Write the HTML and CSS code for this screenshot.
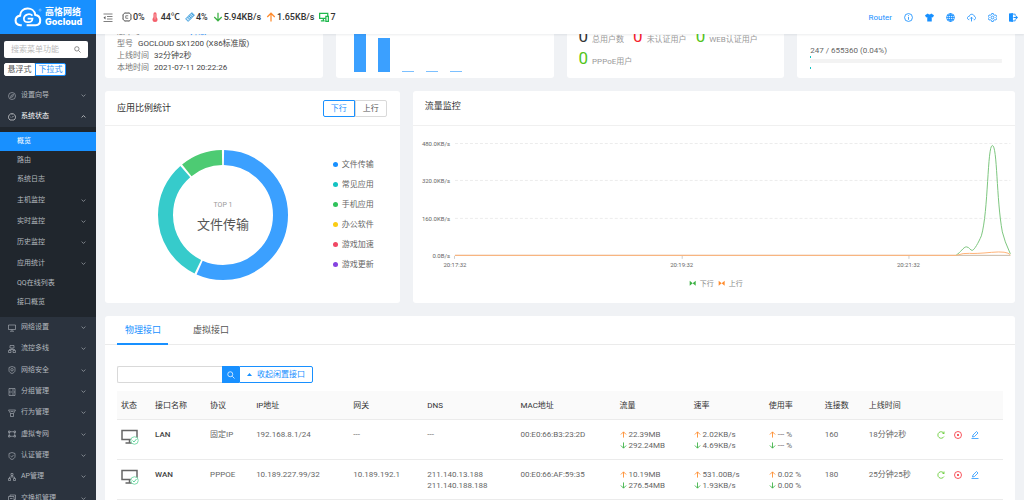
FILE: index.html
```html
<!DOCTYPE html>
<html lang="zh-CN">
<head>
  <meta charset="UTF-8" />
  <meta name="viewport" content="width=device-width, initial-scale=1.0" />
  <title>高恪网络 - 概览</title>
  <link rel="stylesheet" href="styles.css">
</head>
<body>
  <!-- shared icons -->
  <svg class="sprite" aria-hidden="true">
    <symbol id="i-up" viewBox="0 0 16 16"><path d="M8 15V2M2 8l6-6 6 6" /></symbol>
    <symbol id="i-down" viewBox="0 0 16 16"><path d="M8 1v13M2 8l6 6 6-6" /></symbol>
    <symbol id="i-chev" viewBox="0 0 16 16"><path d="M2 5l6 6 6-6" /></symbol>
    <symbol id="i-search" viewBox="0 0 16 16"><circle cx="6.5" cy="6.5" r="5" /><path d="M10.5 10.5L15 15" /></symbol>
    <symbol id="i-pc" viewBox="0 0 36 32">
      <path d="M2 3h30v18H2zM17 21v6M9 28h15" fill="none" stroke="#666" stroke-width="3" />
      <circle cx="27" cy="23" r="7.5" fill="#fff" stroke="#7fdcae" stroke-width="2" />
      <path d="M23 23l3 3 5-6" fill="none" stroke="#5fd39a" stroke-width="2" />
    </symbol>
    <symbol id="i-reload" viewBox="0 0 16 16"><path d="M14 5A6.5 6.5 0 1 0 14 11M14 1v4h-3" /></symbol>
    <symbol id="i-stop" viewBox="0 0 16 16"><circle cx="8" cy="8" r="7" /><path d="M6 6l4 4M10 6l-4 4" /></symbol>
    <symbol id="i-edit" viewBox="0 0 16 16"><path d="M1 15h14M3 12l1-4 7-7 3 3-7 7z" /></symbol>
  </svg>

  <aside class="sidebar">
    <a class="logo" href="#">
      <svg class="logo-cloud" viewBox="0 0 80 58" aria-hidden="true">
        <path d="M22 53h-4C-1 51 0 28 17 25 18-1 58-3 61 23c18 2 20 28 1 30H36" fill="none" stroke="#fff" stroke-width="6" />
        <path d="M53 25c-9-8-25-3-25 9 0 13 24 14 25 0H39" fill="none" stroke="#fff" stroke-width="5" />
        <circle cx="75" cy="9" r="3" fill="none" stroke="#fff" stroke-width="1" />
      </svg>
      <span class="logo-text"><b>高恪网络</b><b class="latin">Gocloud</b></span>
    </a>
    <div class="menu-search">
      <input type="text" aria-label="搜索菜单功能" placeholder="搜索菜单功能" />
      <svg class="ico"><use href="#i-search" /></svg>
    </div>
    <div class="menu-mode">
      <button type="button">悬浮式</button><button type="button" class="on">下拉式</button>
    </div>
    <nav>
      <ul class="menu">
        <li><a href="#"><svg class="ico" viewBox="0 0 16 16"><circle cx="8" cy="8" r="7" /><path d="M11 5L9.5 9.5 5 11l1.5-4.5z" /></svg>设置向导<svg class="chev"><use href="#i-chev" /></svg></a></li>
        <li><a href="#" class="open"><svg class="ico" viewBox="0 0 16 16"><path d="M4 14a7 7 0 1 1 8 0zM8 9l3-3M4 8h1M8 3v1" /></svg>系统状态<svg class="chev"><use href="#i-chev" /></svg></a></li>
      </ul>
      <ul class="submenu">
        <li><a href="#" class="active">概览</a></li>
        <li><a href="#">路由</a></li>
        <li><a href="#">系统日志</a></li>
        <li class="more"><a href="#">主机监控<svg class="chev"><use href="#i-chev" /></svg></a></li>
        <li class="more"><a href="#">实时监控<svg class="chev"><use href="#i-chev" /></svg></a></li>
        <li class="more"><a href="#">历史监控<svg class="chev"><use href="#i-chev" /></svg></a></li>
        <li class="more"><a href="#">应用统计<svg class="chev"><use href="#i-chev" /></svg></a></li>
        <li><a href="#">QQ在线列表</a></li>
        <li><a href="#">接口概览</a></li>
      </ul>
      <ul class="menu">
        <li><a href="#"><svg class="ico" viewBox="0 0 16 16"><path d="M1 2h14v9H1zM8 11v3M4 14.5h8" /></svg>网络设置<svg class="chev"><use href="#i-chev" /></svg></a></li>
        <li><a href="#"><svg class="ico" viewBox="0 0 16 16"><path d="M4 1h8v5H4zM8 6v3M2 9h12M1 11h5v4H1zM10 11h5v4h-5z" /></svg>流控多线<svg class="chev"><use href="#i-chev" /></svg></a></li>
        <li><a href="#"><svg class="ico" viewBox="0 0 16 16"><path d="M8 1l6 2v6c0 3-3 5-6 6-3-1-6-3-6-6V3z" /><circle cx="8" cy="7.5" r="2.5" /></svg>网络安全<svg class="chev"><use href="#i-chev" /></svg></a></li>
        <li><a href="#"><svg class="ico" viewBox="0 0 16 16"><path d="M2 1h12v14H2zM2 8h12M5 4h1M8 4h4M5 12h1M8 12h4" /></svg>分组管理<svg class="chev"><use href="#i-chev" /></svg></a></li>
        <li><a href="#"><svg class="ico" viewBox="0 0 16 16"><path d="M1 2h14l-4 7v6H5V9zM5 9h6M5 5h6" /></svg>行为管理<svg class="chev"><use href="#i-chev" /></svg></a></li>
        <li><a href="#"><svg class="ico" viewBox="0 0 16 16"><path d="M1 2h3v3H1zM12 2h3v3h-3zM1 11h3v3H1zM12 11h3v3h-3zM4 3.5h8M4 12.5h8M2.5 5v6M13.5 5v6" /></svg>虚拟专网<svg class="chev"><use href="#i-chev" /></svg></a></li>
        <li><a href="#"><svg class="ico" viewBox="0 0 16 16"><path d="M8 1l6 2v6c0 3-3 5-6 6-3-1-6-3-6-6V3zM5 8l2.5 2L11 6" /></svg>认证管理<svg class="chev"><use href="#i-chev" /></svg></a></li>
        <li><a href="#"><svg class="ico" viewBox="0 0 16 16"><path d="M6 1h4v4H6zM1 11h4v4H1zM11 11h4v4h-4zM8 5v3M3 11V8h10v3" /></svg>AP管理<svg class="chev"><use href="#i-chev" /></svg></a></li>
        <li><a href="#"><svg class="ico" viewBox="0 0 16 16"><path d="M1 5h11v9H1zM4 5V2h11v9h-3M4 9h5" /></svg>交换机管理<svg class="chev"><use href="#i-chev" /></svg></a></li>
      </ul>
    </nav>
  </aside>

  <div class="page">
    <header class="topbar">
      <button type="button" class="fold" aria-label="收起菜单">
        <svg viewBox="0 0 20 18"><path d="M1 2h18M8 7h11M8 12h11M1 17h18" fill="none" stroke="#555" stroke-width="1.5" /><path d="M5 6v7L1 9.5z" fill="#555" /></svg>
      </button>
      <div class="stats">
        <span><svg class="ico gray" viewBox="0 0 16 16"><rect x="2" y="2" width="12" height="12" rx="3" /><path d="M10 6H6v4h4M5 0v2M8 0v2M11 0v2M5 14v2M8 14v2M11 14v2M0 5h2M0 8h2M0 11h2M14 5h2M14 8h2M14 11h2" /></svg>0%</span>
        <span><svg class="ico" viewBox="0 0 16 16"><path d="M8 3v9" stroke="#f4606c" stroke-width="5" stroke-linecap="round" /><circle cx="8" cy="12" r="4" fill="#f4606c" stroke="none" /><path d="M8 3v9" stroke="#fbd0d3" stroke-width="1" /></svg>44℃</span>
        <span><svg class="ico" viewBox="0 0 16 16"><path d="M1 11L11 1l4 4L5 15z" fill="#bfe0f7" stroke="#3c9ddb" stroke-width="1.5" /><path d="M4 8l4 4M6 6l4 4M8 4l4 4M10 2l4 4" stroke="#3c9ddb" /></svg>4%</span>
        <span><svg class="ico green"><use href="#i-down" /></svg>5.94KB/s</span>
        <span><svg class="ico orange"><use href="#i-up" /></svg>1.65KB/s</span>
        <span><svg class="ico pcs" viewBox="0 0 16 16"><path d="M1 2h13v8H1zM7 10v3M3 14h6" /><path d="M11 7h4v8h-4z" fill="#fff" /></svg>7</span>
      </div>
      <nav class="tools">
        <a href="#">Router</a>
        <a href="#" aria-label="信息"><svg class="ico" viewBox="0 0 16 16"><circle cx="8" cy="8" r="7" /><path d="M8 7v5M8 4v1.5" /></svg></a>
        <a href="#" aria-label="主题"><svg class="ico" viewBox="0 0 16 16"><path d="M5 1q3 3 6 0l5 3-2 4-2-1v8H4V7L2 8 0 4z" fill="#1890ff" stroke="none" /></svg></a>
        <a href="#" aria-label="语言"><svg class="ico" viewBox="0 0 16 16"><circle cx="8" cy="8" r="7" /><ellipse cx="8" cy="8" rx="3.5" ry="7" /><path d="M1 8h14M8 1v14M2 4.5h12M2 11.5h12" /></svg></a>
        <a href="#" aria-label="升级"><svg class="ico" viewBox="0 0 16 16"><path d="M4 12C-1 11 0 6 4 6c1-5 8-5 9 0 4 1 3 6-1 6M8 15V8M5.5 10L8 7.5l2.5 2.5" /></svg></a>
        <a href="#" aria-label="设置"><svg class="ico" viewBox="0 0 16 16"><path d="M6.5 1h3l.5 2 2 1 2-.5 1.5 2.5L14 8l1.5 2-1.5 2.5-2-.5-2 1-.5 2h-3L6 13l-2-1-2 .5L.5 10 2 8 .5 6 2 3.5 4 4l2-1z" /><circle cx="8" cy="8" r="2.5" /></svg></a>
        <a href="#" aria-label="退出"><svg class="ico" viewBox="0 0 16 16"><path d="M0 1l7-1v16l-7-1z" fill="#1890ff" stroke="none" /><path d="M7 2h4v3M7 14h4v-3" /><path d="M8 7h4V4l4 4-4 4V9H8z" fill="#1890ff" stroke="none" /></svg></a>
      </nav>
    </header>

    <main class="content">
      <section class="card top sysinfo">
        <p><span>版本号</span>6.2.0.20610 <a href="#">升级</a></p>
        <p><span>型号</span>GOCLOUD SX1200 (X86标准版)</p>
        <p><span>上线时间</span>32分钟2秒</p>
        <p><span>本地时间</span>2021-07-11 20:22:26</p>
      </section>
      <section class="card top bars">
        <i style="height:60px"></i><i style="height:34px"></i><i class="low"></i><i class="low"></i><i class="low"></i>
      </section>
      <section class="card top users">
        <p><span><b>0</b>总用户数</span><span><b class="red">0</b>未认证用户</span><span><b class="lime">0</b>WEB认证用户</span></p>
        <p><span><b class="lime">0</b>PPPoE用户</span></p>
      </section>
      <section class="card top conns">
        <p>247 / 655360 (0.04%)</p>
        <div class="meter"></div>
      </section>

      <section class="card ratio">
        <div class="card-head">
          <h2>应用比例统计</h2>
          <div class="switch"><button type="button" class="on">下行</button><button type="button">上行</button></div>
        </div>
        <div class="ratio-body">
          <svg class="donut" viewBox="0 0 130 130">
            <g fill="none" stroke-width="15" transform="rotate(-90 65 65)">
              <circle cx="65" cy="65" r="57.5" pathLength="360" stroke="#3ba0ff" stroke-dasharray="203 157" stroke-dashoffset="-1" />
              <circle cx="65" cy="65" r="57.5" pathLength="360" stroke="#36cbcb" stroke-dasharray="113 247" stroke-dashoffset="-206" />
              <circle cx="65" cy="65" r="57.5" pathLength="360" stroke="#4dcb73" stroke-dasharray="38 322" stroke-dashoffset="-321" />
            </g>
            <text x="65" y="57" class="donut-top">TOP 1</text>
            <text x="65" y="79" class="donut-name">文件传输</text>
          </svg>
          <ul class="legend">
            <li class="c1">文件传输</li>
            <li class="c2">常见应用</li>
            <li class="c3">手机应用</li>
            <li class="c4">办公软件</li>
            <li class="c5">游戏加速</li>
            <li class="c6">游戏更新</li>
          </ul>
        </div>
      </section>

      <section class="card traffic">
        <div class="card-head"><h2>流量监控</h2></div>
        <svg class="chart" viewBox="0 0 603 177">
          <path d="M42 17.5h556M42 54.5h556M42 92.5h556" stroke="#ececec" stroke-dasharray="3 2" />
          <path d="M41.5 130v3M269.5 130v3M496.5 130v3" stroke="#ccc" />
          <g class="axis-y">
            <text x="37" y="20">480.0KB/s</text>
            <text x="37" y="57">320.0KB/s</text>
            <text x="37" y="95">160.0KB/s</text>
            <text x="37" y="132">0.0B/s</text>
          </g>
          <g class="axis-x">
            <text x="42" y="141">20:17:32</text>
            <text x="269" y="141">20:19:32</text>
            <text x="496" y="141">20:21:32</text>
          </g>
          <path d="M42 129.5H598" stroke="#c9b8a6" />
          <path d="M544 129C548 127 551 121 554 121S558 125 560 124.5 566 117 569 110C576 86 575 19.5 580 19.5S584 74 590 106Q592 115 598 128" fill="none" stroke="#7cc67e" />
          <path d="M42 129.5H544Q551 127 557 127.5T579 126.5 598 129" fill="none" stroke="#ffb377" />
          <path d="M277 155l3 2.5-3 2.5zM283 155l-3 2.5 3 2.5z" fill="#3bb143" />
          <text x="287" y="160" class="key">下行</text>
          <path d="M306 155l3 2.5-3 2.5zM312 155l-3 2.5 3 2.5z" fill="#ff8b2c" />
          <text x="316" y="160" class="key">上行</text>
        </svg>
      </section>

      <section class="card ports">
        <div class="tabs"><button type="button" class="on">物理接口</button><button type="button">虚拟接口</button></div>
        <div class="ports-body">
          <form class="port-search">
            <input type="text" aria-label="搜索接口" />
            <button type="submit" class="go" aria-label="搜索"><svg class="ico"><use href="#i-search" /></svg></button>
            <button type="button" class="idle"><svg viewBox="0 0 10 6"><path d="M0 6l5-6 5 6z" fill="#1890ff" /></svg>收起闲置接口</button>
          </form>
          <table>
            <colgroup>
              <col class="w-state" /><col class="w-name" /><col class="w-proto" /><col class="w-ip" /><col class="w-gw" /><col class="w-dns" /><col class="w-mac" />
              <col class="w-flow" /><col class="w-rate" /><col class="w-use" /><col class="w-conn" /><col class="w-time" /><col class="w-act" />
            </colgroup>
            <thead>
              <tr><th>状态</th><th>接口名称</th><th>协议</th><th>IP地址</th><th>网关</th><th>DNS</th><th>MAC地址</th><th>流量</th><th>速率</th><th>使用率</th><th>连接数</th><th>上线时间</th><th></th></tr>
            </thead>
            <tbody>
              <tr>
                <td><svg class="pc"><use href="#i-pc" /></svg></td>
                <td class="name">LAN</td>
                <td>固定IP</td>
                <td>192.168.8.1/24</td>
                <td>---</td>
                <td>---</td>
                <td>00:E0:66:B3:23:2D</td>
                <td><svg class="ico orange"><use href="#i-up" /></svg>22.39MB<br><svg class="ico green"><use href="#i-down" /></svg>292.24MB</td>
                <td><svg class="ico orange"><use href="#i-up" /></svg>2.02KB/s<br><svg class="ico green"><use href="#i-down" /></svg>4.69KB/s</td>
                <td><svg class="ico orange"><use href="#i-up" /></svg>--- %<br><svg class="ico green"><use href="#i-down" /></svg>--- %</td>
                <td>160</td>
                <td>18分钟2秒</td>
                <td><div class="acts"><a href="#" aria-label="重连"><svg class="ico lime"><use href="#i-reload" /></svg></a><a href="#" aria-label="断开"><svg class="ico red"><use href="#i-stop" /></svg></a><a href="#" aria-label="编辑"><svg class="ico blue"><use href="#i-edit" /></svg></a></div></td>
              </tr>
              <tr>
                <td><svg class="pc"><use href="#i-pc" /></svg></td>
                <td class="name">WAN</td>
                <td>PPPOE</td>
                <td>10.189.227.99/32</td>
                <td>10.189.192.1</td>
                <td>211.140.13.188<br>211.140.188.188</td>
                <td>00:E0:66:AF:59:35</td>
                <td><svg class="ico orange"><use href="#i-up" /></svg>10.19MB<br><svg class="ico green"><use href="#i-down" /></svg>276.54MB</td>
                <td><svg class="ico orange"><use href="#i-up" /></svg>531.00B/s<br><svg class="ico green"><use href="#i-down" /></svg>1.93KB/s</td>
                <td><svg class="ico orange"><use href="#i-up" /></svg>0.02 %<br><svg class="ico green"><use href="#i-down" /></svg>0.00 %</td>
                <td>180</td>
                <td>25分钟25秒</td>
                <td><div class="acts"><a href="#" aria-label="重连"><svg class="ico lime"><use href="#i-reload" /></svg></a><a href="#" aria-label="断开"><svg class="ico red"><use href="#i-stop" /></svg></a><a href="#" aria-label="编辑"><svg class="ico blue"><use href="#i-edit" /></svg></a></div></td>
              </tr>
            </tbody>
          </table>
        </div>
      </section>
    </main>
  </div>
</body>
</html>
```
FILE: styles.css
```css
* { box-sizing: border-box; }
body {
  margin: 0;
  height: 100vh;
  display: flex;
  overflow: hidden;
  background: #f0f2f5;
  color: #666;
  font-family: Roboto, "Noto Sans CJK SC", sans-serif;
  font-size: 8px;
  line-height: 11px;
}
ul { list-style: none; margin: 0; padding: 0; }
p, h2 { margin: 0; }
a { color: #1890ff; text-decoration: none; }
button, input { font: inherit; margin: 0; border-radius: 0; }
button { padding: 0; cursor: pointer; white-space: nowrap; }
.sprite { position: absolute; width: 0; height: 0; }
.ico {
  width: 8px;
  height: 8px;
  fill: none;
  stroke: currentColor;
  stroke-width: 1.5px;
  flex: none;
}
.green { color: #3bb143; }
.orange { color: #ff8b2c; }
.lime { color: #52c41a; }
.red { color: #f5222d; }
.blue { color: #1890ff; }
.gray { color: #777; }

/* sidebar */
.sidebar {
  width: 96px;
  flex: none;
  overflow: hidden;
  background: #2b333e;
}
.logo {
  height: 34px;
  display: flex;
  align-items: center;
  gap: 3px;
  padding-left: 14px;
  background: #1890ff;
  color: #fff;
}
.logo-cloud { width: 28px; height: 20px; }
.logo-text { display: flex; flex-direction: column; font-size: 9px; line-height: 9px; }
.logo-text .latin { font-family: Inter, sans-serif; font-weight: 800; }
.menu-search {
  display: flex;
  align-items: center;
  height: 17px;
  margin: 7px 8px 5px 4px;
  padding: 0 7px;
  background: #fff;
  border-radius: 2px;
}
.menu-search input {
  flex: 1;
  min-width: 0;
  padding: 0;
  border: 0;
}
.menu-search input::placeholder { color: #bbb; }
.menu-search .ico { width: 7px; height: 7px; color: #555; }
.menu-mode { display: flex; margin: 0 0 9px 4px; }
.menu-mode button {
  width: 31px;
  height: 13px;
  border: 1px solid #fff;
  border-radius: 2px 0 0 2px;
  background: #fff;
  color: #555;
}
.menu-mode .on { border-color: #1890ff; border-radius: 0 2px 2px 0; color: #1890ff; }
.sidebar li a {
  display: flex;
  align-items: center;
  height: 100%;
  padding-right: 10px;
  color: #b4b9bf;
  font-size: 7px;
}
.menu li { height: 21px; }
.menu li:nth-child(3n) { height: 22px; }
.menu a { padding-left: 8px; gap: 5px; }
.menu .ico { stroke-width: 1.2px; }
.chev {
  width: 5px;
  height: 5px;
  margin-left: auto;
  fill: none;
  stroke: currentColor;
  stroke-width: 2px;
}
.sidebar li .open { color: #fff; }
.open .chev { transform: rotate(180deg); }
.submenu { padding: 5px 0; background: #20262d; }
.submenu li { height: 19px; }
.submenu .more { height: 21px; }
.submenu .more:nth-child(4) { height: 22px; }
.submenu a { padding-left: 17px; }
.sidebar li .active { background: #1890ff; color: #fff; }

/* top bar */
.page { flex: 1; min-width: 0; }
.topbar {
  height: 34px;
  display: flex;
  align-items: center;
  padding: 0 6px 0 7px;
  background: #fff;
  box-shadow: 0 1px 2px rgba(0, 21, 41, 0.08);
  position: relative;
  z-index: 1;
}
.fold { border: 0; background: none; display: flex; }
.fold svg { width: 10px; height: 9px; }
.stats {
  display: flex;
  gap: 5px;
  margin-left: 9px;
  color: #333;
  font-size: 9px;
  font-weight: 500;
}
.stats span { display: flex; align-items: center; gap: 1px; }
.stats .ico { width: 10px; height: 10px; }
.stats .green, .stats .orange { stroke-width: 2px; }
.pcs { color: #1fb84d; stroke-width: 2px; }
.tools { display: flex; align-items: center; gap: 12px; margin-left: auto; }
.tools .ico { display: block; width: 9px; height: 9px; }

/* cards */
.content {
  display: grid;
  grid-template-columns: repeat(12, minmax(0, 1fr));
  gap: 13px;
  padding: 0 9px;
}
.card { background: #fff; border-radius: 3px; overflow: hidden; }
.top {
  grid-column: span 3;
  height: 44px;
  display: flex;
  flex-direction: column;
  justify-content: flex-end;
  padding: 0 13px 4px;
  border-radius: 0 0 3px 3px;
}
.sysinfo { padding-left: 12px; color: #444; white-space: nowrap; }
.sysinfo p { line-height: 12px; }
.sysinfo span { margin-right: 5px; color: #777; }
.bars {
  flex-direction: row;
  justify-content: flex-start;
  align-items: flex-end;
  gap: 12px;
  padding: 0 18px 6px;
}
.bars i { width: 12px; flex: none; background: #3ba0ff; }
.bars .low { height: 1px; background: #7cc0ff; }
.users { padding: 0 12px 6px; color: #999; white-space: nowrap; }
.users p { display: flex; gap: 9px; height: 22px; flex: none; line-height: 17px; }
.users span { display: flex; align-items: baseline; gap: 4px; }
.users b { font-size: 17px; font-weight: 400; }
.users b:not([class]) { color: #333; }
.conns { padding-bottom: 13px; }
.meter {
  position: relative;
  height: 9px;
  background: linear-gradient(#f3f3f3, #f3f3f3) center / 100% 4px no-repeat;
}
.meter::before {
  content: "";
  position: absolute;
  width: 1px;
  height: 9px;
  border: solid #13c2c2;
  border-width: 2px 0;
}

.ratio { grid-column: span 4; }
.traffic { grid-column: span 8; }
.card-head {
  height: 35px;
  display: flex;
  align-items: center;
  justify-content: space-between;
  padding: 0 13px 0 12px;
  border-bottom: 1px solid #f0f0f0;
}
.traffic .card-head { padding-bottom: 4px; }
h2 { font-size: 9px; font-weight: 400; color: #333; }
.switch { display: flex; }
.switch button {
  width: 32px;
  height: 17px;
  border: 1px solid #d9d9d9;
  border-radius: 0 2px 2px 0;
  background: #fff;
  color: #555;
}
.switch .on { border-color: #1890ff; border-radius: 2px 0 0 2px; color: #1890ff; }
.ratio-body {
  display: flex;
  align-items: center;
  justify-content: space-between;
  height: 177px;
  padding: 0 26px 0 53px;
}
.donut { width: 130px; height: 130px; }
.donut-top { font-size: 7px; fill: #999; text-anchor: middle; }
.donut-name { font-size: 13px; fill: #555; text-anchor: middle; }
.legend { display: grid; gap: 9px; }
.legend li { display: flex; align-items: center; gap: 4px; }
.legend li::before {
  content: "";
  width: 5px;
  height: 5px;
  border-radius: 50%;
  background: currentColor;
}
.c1::before { color: #1890ff; }
.c2::before { color: #13c2c2; }
.c3::before { color: #2fc25b; }
.c4::before { color: #facc14; }
.c5::before { color: #f04864; }
.c6::before { color: #8543e0; }
.chart { display: block; width: 100%; }
.chart text { font-size: 6px; fill: #666; }
.axis-y { text-anchor: end; }
.axis-x { text-anchor: middle; }
.chart .key { font-size: 7px; fill: #888; }

/* interfaces */
.ports { grid-column: 1 / -1; }
.tabs {
  display: flex;
  gap: 17px;
  height: 29px;
  padding: 0 12px;
  border-bottom: 1px solid #ebebeb;
}
.tabs button {
  width: 51px;
  height: 29px;
  padding: 2px 0 0 1px;
  border: 0;
  border-bottom: 2px solid transparent;
  background: none;
  color: #555;
  font-size: 9px;
}
.tabs .on { border-color: #1890ff; color: #1890ff; }
.ports-body { padding: 21px 12px; }
.port-search { display: flex; height: 17px; margin-bottom: 8px; }
.port-search input {
  width: 105px;
  border: 1px solid #d9d9d9;
  border-right: 0;
  border-radius: 2px 0 0 2px;
}
.port-search button { display: flex; align-items: center; justify-content: center; border: 1px solid #1890ff; }
.port-search .go { width: 17px; background: #1890ff; color: #fff; }
.port-search .idle {
  width: 74px;
  gap: 5px;
  border-radius: 0 2px 2px 0;
  background: #fff;
  color: #1890ff;
}
.idle svg { width: 5px; height: 3px; }
table { width: 100%; table-layout: fixed; border-collapse: collapse; }
th, td {
  padding: 9px 0 8px 4px;
  border-bottom: 1px solid #ebebeb;
  text-align: left;
  vertical-align: top;
  white-space: nowrap;
}
th { background: #fafafa; color: #333; font-weight: 400; }
td { height: 40px; }
td .ico { width: 7px; height: 7px; margin-right: 2px; vertical-align: -1px; stroke-width: 2px; }
.name { color: #444; font-weight: 500; }
.pc { display: block; width: 18px; height: 16px; }
.acts { display: flex; gap: 9px; }
.acts a { display: flex; align-items: center; height: 11px; }
.acts .ico { width: 8px; height: 8px; margin: 0; stroke-width: 1.5px; }
.w-state { width: 34px; }
.w-name { width: 55px; }
.w-proto { width: 46px; }
.w-ip { width: 97px; }
.w-gw { width: 74px; }
.w-dns { width: 93px; }
.w-mac { width: 99px; }
.w-flow { width: 74px; }
.w-rate { width: 75px; }
.w-use { width: 56px; }
.w-conn { width: 44px; }
.w-time { width: 68px; }
.w-act { width: 70px; }
```
